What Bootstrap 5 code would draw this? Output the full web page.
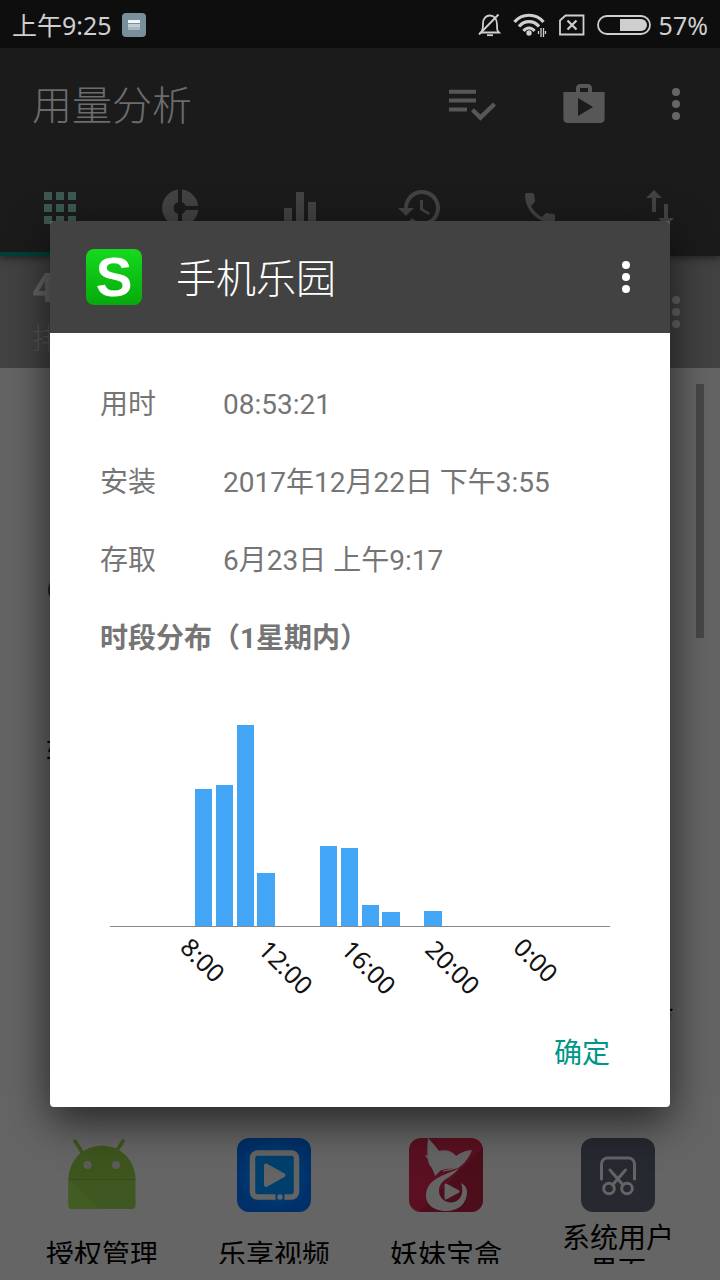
<!DOCTYPE html>
<html lang="zh-CN">
<head>
<meta charset="utf-8">
<meta name="viewport" content="width=device-width, initial-scale=1">
<title>用量分析</title>
<link href="https://cdn.jsdelivr.net/npm/bootstrap@5.3.0/dist/css/bootstrap.min.css" rel="stylesheet">
<style>
  body { font-family: Roboto, "Noto Sans CJK SC", sans-serif; background: #656565; color: #000; font-size: 28px; line-height: 38px; }
  svg { display: block; flex: none; }
  button { border: 0; background: none; padding: 0; color: inherit; }
  .status-bar { height: 48px; background: #0e0e0e; color: #cfcfcf; font: 24px/48px "Noto Sans", "Noto Sans CJK SC", sans-serif; padding: 2px 12px 0; }
  .clock { font-size: 25px; }
  .app-bar { background: #1b1b1b; color: #575757; box-shadow: 0 2px 8px rgba(0,0,0,.5); z-index: 1; }
  .tool-row { height: 112px; padding: 0 32px; color: #575757; }
  .screen-title { font-size: 40px; line-height: 48px; font-weight: 300; color: #6c6c6c; padding-top: 6px; }
  .tab-row { height: 96px; color: #434343; }
  .tab-row button { border-bottom: 4px solid transparent; border-top: 4px solid transparent; }
  .tab-row .current { color: #3b5952; border-bottom-color: #003f39; }
  .summary-row { height: 112px; background: #424242; color: #666; padding: 18px 32px; }
  .summary-total { font-size: 40px; line-height: 48px; }
  .summary-note { color: #575757; padding-top: 8px; font-weight: 300; }
  .scroll-pane { margin: 16px; overflow: hidden; }
  .scroll-thumb { width: 8px; height: 254px; top: 0; right: 0; background: #474747; }
  .app-grid { display: grid; grid-template-columns: repeat(4, 1fr); grid-template-rows: 399px 260px 243px; }
  .app-name { height: 66px; line-height: 33px; width: 120px; padding-top: 4px; }
  .overlay { top: 48px; padding: 0 50px; }
  .sheet { background: #fff; border-radius: 4px; box-shadow: 0 14px 44px rgba(0,0,0,.65); }
  .sheet-head { height: 112px; background: #424242; color: #fff; padding: 0 36px; gap: 34px; border-radius: 4px 4px 0 0; }
  .sheet-title { font-size: 40px; line-height: 48px; font-weight: 300; padding-top: 6px; }
  .sheet-body { padding: 31px 50px 0; color: #757575; }
  .facts { grid-template-columns: 123px 1fr; }
  .facts > * { padding: 22px 0 18px; margin: 0; font-weight: 400; }
  .section-title { padding: 22px 0 18px; font-size: 28px; line-height: 38px; margin: 0; }
  .usage-chart { margin: 0 10px; }
  .bars { height: 251px; border-bottom: 1px solid #888; }
  .bars > div { flex: 1 1 0; }
  .bars i { display: block; width: 84%; margin: 0 auto; background: #42a5f5; }
  .axis { display: grid; grid-template-columns: repeat(24, 1fr); height: 74px; padding-top: 7px; font: 25px/30px "Noto Sans", sans-serif; color: #111; }
  .axis div { display: flex; justify-content: center; align-items: flex-start; min-width: 0; }
  .axis span { writing-mode: vertical-rl; transform: rotate(-45deg); flex: none; padding-right: 2px; }
  .sheet-foot { padding: 23px 60px 27px; }
  .sheet-foot button { color: #009688; line-height: 52px; padding-top: 4px; }
  .logo-letter { font: bold 55px "Liberation Sans", sans-serif; }
</style>
</head>
<body>
<div class="d-flex flex-column vh-100 overflow-hidden position-relative">
  <header class="status-bar d-flex align-items-center justify-content-between">
    <div class="d-flex align-items-center gap-2">
      <span class="clock">上午9:25</span>
      <svg width="26" height="24" viewBox="0 0 26 24"><rect x="2" width="24" height="24" rx="4" fill="#78909c"/><path d="M8 12h12v5H8z" fill="#a9b7bd"/><path d="M8 11h12v3H8z" fill="#c3cdd1"/><path d="M8 7h12v3H8z" fill="#f2f5f6"/></svg>
    </div>
    <div class="d-flex align-items-center gap-2">
      <svg width="27" height="24" viewBox="0 0 27 24" fill="none" stroke="#cfcfcf" stroke-width="1.8"><path d="M3 19.500h18c-2-2-2-3-2-8 0-6-3-9-7-9s-7 3-7 8c0 5 0 7-2 9z"/><path d="M9 22.200h6"/><path d="M1 21.500L20.500 1.500"/></svg>
      <svg width="34" height="26" viewBox="0 0 34 26" fill="none" stroke="#cfcfcf"><path d="M1.500 10C9 1 23 1 30.500 10" stroke-width="3.200"/><path d="M6 14.500c5.500-6.500 14.500-6.500 20 0" stroke-width="3.200"/><path d="M10.500 19c3-4 8-4 11 0" stroke-width="3"/><circle cx="16" cy="21" r="2.700" fill="#cfcfcf" stroke="none"/><path d="M25.500 19v3M28 16v9M30.500 16v9M32.500 19v3" stroke-width="1.300"/></svg>
      <svg class="ms-1" width="26" height="22" viewBox="0 0 26 22" fill="none" stroke="#cfcfcf" stroke-width="1.800"><path d="M6.500 1.500h18v19h-23.500v-14z"/><path d="M8.500 6.500l9 9M17.500 6.500l-9 9" stroke-width="2.200"/></svg>
      <svg class="ms-1" width="54" height="20" viewBox="0 0 54 20"><rect x="1" y="1" width="52" height="18" rx="9" fill="none" stroke="#cfcfcf" stroke-width="1.800"/><path d="M23 4h21a6 6 0 0 1 0 12H23z" fill="#cfcfcf"/></svg>
      <span class="clock">57%</span>
    </div>
  </header>

  <div class="app-bar position-relative">
    <div class="tool-row d-flex align-items-center">
      <h1 class="screen-title m-0 me-auto">用量分析</h1>
      <div class="d-flex align-items-center">
        <button type="button" aria-label="选择"><svg width="48" height="48" viewBox="0 0 24 24" fill="currentColor"><path d="M14 10H.500v2H14v-2zm0-4.300H.500v2H14v-2zM.500 16.500h9v-2h-9v2zM22.500 12l1.500 1.500-7.800 7.700-4.700-4.800 1.500-1.500 3.200 3.200z" transform="translate(0 -.8)"/></svg></button>
        <button type="button" class="ms-5 me-5 ps-3 pe-2" aria-label="应用商店"><svg width="48" height="48" viewBox="0 0 24 24" fill="currentColor"><path fill-rule="evenodd" d="M16 6V4c0-1.100-.9-2-2-2h-4c-1.100 0-2 .9-2 2v2H1.700v13.500c0 1.100.9 2 2 2h16.600c1.100 0 2-.9 2-2V6zm-6-2h4v2h-4zM9 18V9l7.500 4.500z"/></svg></button>
        <button type="button" aria-label="更多"><svg width="24" height="48" viewBox="0 0 24 48" fill="#666"><circle cx="12" cy="12" r="4"/><circle cx="12" cy="24" r="4"/><circle cx="12" cy="36" r="4"/></svg></button>
      </div>
    </div>
    <nav class="tab-row row row-cols-6 g-0">
      <button type="button" class="col d-flex align-items-center justify-content-center current" aria-label="应用"><svg width="48" height="48" viewBox="0 0 24 24" fill="currentColor"><path d="M4 8h4V4H4zm6 12h4v-4h-4zm-6 0h4v-4H4zm0-6h4v-4H4zm6 0h4v-4h-4zm6-10v4h4V4zm-6 4h4V4h-4zm6 6h4v-4h-4zm0 6h4v-4h-4z"/></svg></button>
      <button type="button" class="col d-flex align-items-center justify-content-center" aria-label="占比"><svg width="48" height="48" viewBox="0 0 24 24" fill="currentColor"><path d="M11 2.800v6.300a3 3 0 0 0 0 5.800v6.300a9.300 9.300 0 0 1 0-18.400zM13 2.800v6.300c.9.300 1.600 1 1.900 1.900h6.200A9.200 9.200 0 0 0 13 2.800zM14.900 13c-.3.900-1 1.600-1.900 1.900v6.300a9.200 9.200 0 0 0 8.100-8.200z"/></svg></button>
      <button type="button" class="col d-flex align-items-center justify-content-center" aria-label="统计"><svg width="48" height="48" viewBox="0 0 24 24" fill="currentColor"><path d="M10 20h4V4h-4zm-6 0h4v-8H4zM16 9v11h4V9z"/></svg></button>
      <button type="button" class="col d-flex align-items-center justify-content-center" aria-label="历史"><svg width="48" height="48" viewBox="0 0 24 24" fill="currentColor"><path d="M13 3a9 9 0 0 0-9 9H1l3.890 3.890.07.140L9 12H6a7 7 0 1 1 2.060 4.940l-1.420 1.420A9 9 0 1 0 13 3zm-1 5v5l4.280 2.540.720-1.210-3.500-2.080V8z"/></svg></button>
      <button type="button" class="col d-flex align-items-center justify-content-center" aria-label="通话"><svg width="40" height="40" viewBox="0 0 24 24" fill="currentColor"><path d="M6.620 10.790a15.150 15.150 0 0 0 6.590 6.590l2.200-2.200c.270-.270.670-.360 1.020-.240 1.120.370 2.330.570 3.570.570.550 0 1 .450 1 1V20c0 .550-.450 1-1 1C10.610 21 3 13.390 3 4c0-.550.450-1 1-1h3.500c.550 0 1 .450 1 1 0 1.250.200 2.450.570 3.570.110.350.030.740-.250 1.020z"/></svg></button>
      <button type="button" class="col d-flex align-items-center justify-content-center" aria-label="流量"><svg width="48" height="48" viewBox="0 0 24 24" fill="currentColor"><path d="M16 17V10h-2v7h-3l4 4 4-4zM9 3L5 7h3v7h2V7h3z"/></svg></button>
    </nav>
  </div>

  <div class="summary-row d-flex align-items-center">
    <div class="me-auto">
      <div class="summary-total fw-bold">4天</div>
      <div class="summary-note">排除</div>
    </div>
    <button type="button" aria-label="更多选项"><svg width="24" height="48" viewBox="0 0 24 48" fill="#666"><circle cx="12" cy="12" r="4"/><circle cx="12" cy="24" r="4"/><circle cx="12" cy="36" r="4"/></svg></button>
  </div>

  <main class="scroll-pane position-relative flex-fill">
    <div class="app-grid">
      <div class="d-flex flex-column align-items-center justify-content-end gap-2">
        <svg width="110" height="238" viewBox="0 0 110 238"><circle cx="15" cy="119" r="14" fill="#222"/></svg>
        <div class="app-name d-flex align-items-center justify-content-center text-center">软件管理</div>
      </div>
      <div></div><div></div><div></div>
      <div></div><div></div><div></div>
      <div class="d-flex flex-column align-items-center justify-content-end">
        <div class="app-name d-flex align-items-center justify-content-center text-center">系统服务</div>
      </div>

      <div class="d-flex flex-column align-items-center justify-content-end gap-2">
        <svg width="74" height="74" viewBox="0 0 74 74"><path d="M10 3l7 11M58 3l-7 11" stroke="#3d551f" stroke-width="3.500" stroke-linecap="round"/><path d="M3.500 41a33.500 33.500 0 0 1 67 0z" fill="#3e561e"/><path d="M3.500 41h67v26a4 4 0 0 1-4 4h-59a4 4 0 0 1-4-4z" fill="#3f5821"/><path d="M3.500 41l30 30h-26a4 4 0 0 1-4-4z" fill="#425c24"/><path d="M3.500 41.500h67" stroke="#354b1b"/><circle cx="22.500" cy="27" r="4" fill="#5c5c5c"/><circle cx="51" cy="27" r="4" fill="#5c5c5c"/></svg>
        <div class="app-name d-flex align-items-center justify-content-center text-center">授权管理</div>
      </div>
      <div class="d-flex flex-column align-items-center justify-content-end gap-2">
        <svg width="74" height="74" viewBox="0 0 74 74"><defs><radialGradient id="blueGlow"><stop offset="0" stop-color="#004a7d"/><stop offset="1" stop-color="#003069"/></radialGradient></defs><rect width="74" height="74" rx="12" fill="url(#blueGlow)"/><rect x="15.500" y="15" width="44" height="44" rx="5" fill="#003f6d" stroke="#646464" stroke-width="5.500"/><path d="M38.500 55h9v8h-9z" fill="#003e73"/><circle cx="43" cy="59" r="2.700" fill="#646464"/><path d="M29 27.500v19.500l17.500-9.700z" fill="#646464" stroke="#646464" stroke-width="4" stroke-linejoin="round"/></svg>
        <div class="app-name d-flex align-items-center justify-content-center text-center">乐享视频</div>
      </div>
      <div class="d-flex flex-column align-items-center justify-content-end gap-2">
        <svg width="74" height="74" viewBox="0 0 74 74"><rect width="74" height="74" rx="12" fill="#5a1020"/><path d="M74 9v53a12 12 0 0 1-12 12H10z" fill="#4d0e1b"/><path d="M19 0c4 4 8 9 11 13 8-2 14 1 17 5 5-4 11-6 16-6-3 8-8 14-14 18-6 1-13 0-18 3l-5 5c-1-4-3-8-6-12-2-7-2-16-1-26z" fill="#646464"/><path d="M17 17c1 5 7 4 7 9M34 33c7-2 13-1 18-7" stroke="#646464" stroke-width="1.300" fill="none"/><path d="M50 29c-5 7-31 8-33 27-1 11 9 17 20 17 13 0 21-8 21-19 0-4-2-7-6-9 3 8 1 17-7 19-8 2-15-4-15-11 0-13 15-13 20-24z" fill="#646464"/><path d="M37 47v13l12-6.500z" fill="#646464" stroke="#646464" stroke-width="3" stroke-linejoin="round"/></svg>
        <div class="app-name d-flex align-items-center justify-content-center text-center">妖妹宝盒</div>
      </div>
      <div class="d-flex flex-column align-items-center justify-content-end gap-2">
        <svg width="74" height="74" viewBox="0 0 74 74"><rect width="74" height="74" rx="12" fill="#262930"/><g fill="none" stroke="#646464" stroke-width="3" stroke-linecap="round"><path d="M20.500 41V26a6 6 0 0 1 6-6h21a6 6 0 0 1 6 6v15M29 32l13 15M44.500 32l-13 15"/><circle cx="28" cy="50.500" r="5.300"/><circle cx="46" cy="50.500" r="5.300"/></g></svg>
        <div class="app-name d-flex align-items-center justify-content-center text-center">系统用户界面</div>
      </div>
    </div>
    <div class="scroll-thumb position-absolute"></div>
  </main>

  <div class="overlay position-absolute start-0 end-0 bottom-0 d-flex align-items-center z-3">
    <section class="sheet w-100" role="dialog" aria-labelledby="sheetTitle">
      <div class="sheet-head d-flex align-items-center">
        <svg width="56" height="56" viewBox="0 0 56 56"><defs><linearGradient id="greenFade" x2="0" y2="1"><stop stop-color="#16d91e"/><stop offset="1" stop-color="#05aa0c"/></linearGradient></defs><rect width="56" height="56" rx="8" fill="url(#greenFade)"/><text class="logo-letter" x="28" y="47" text-anchor="middle" fill="#fff">S</text></svg>
        <h2 class="sheet-title m-0 me-auto" id="sheetTitle">手机乐园</h2>
        <button type="button" aria-label="更多操作"><svg width="16" height="48" viewBox="0 0 16 48" fill="#fff"><circle cx="8" cy="12" r="4"/><circle cx="8" cy="24" r="4"/><circle cx="8" cy="36" r="4"/></svg></button>
      </div>
      <div class="sheet-body">
        <dl class="facts d-grid m-0">
          <dt>用时</dt><dd>08:53:21</dd>
          <dt>安装</dt><dd>2017年12月22日 下午3:55</dd>
          <dt>存取</dt><dd>6月23日 上午9:17</dd>
        </dl>
        <h3 class="section-title fw-bold">时段分布（1星期内）</h3>
        <div class="usage-chart">
          <div class="bars d-flex align-items-end">
            <div></div><div></div><div></div><div></div>
            <div><i style="height:137px"></i></div><div><i style="height:141px"></i></div><div><i style="height:201px"></i></div><div><i style="height:53px"></i></div>
            <div></div><div></div><div><i style="height:80px"></i></div><div><i style="height:78px"></i></div>
            <div><i style="height:21px"></i></div><div><i style="height:14px"></i></div><div></div><div><i style="height:15px"></i></div>
            <div></div><div></div><div></div><div></div>
            <div></div><div></div><div></div><div></div>
          </div>
          <div class="axis">
            <div></div><div></div><div></div><div></div>
            <div><span>8:00</span></div><div></div><div></div><div></div>
            <div><span>12:00</span></div><div></div><div></div><div></div>
            <div><span>16:00</span></div><div></div><div></div><div></div>
            <div><span>20:00</span></div><div></div><div></div><div></div>
            <div><span>0:00</span></div><div></div><div></div><div></div>
          </div>
        </div>
      </div>
      <div class="sheet-foot d-flex justify-content-end">
        <button type="button">确定</button>
      </div>
    </section>
  </div>
</div>
<script src="https://cdn.jsdelivr.net/npm/bootstrap@5.3.0/dist/js/bootstrap.bundle.min.js"></script>
</body>
</html>
